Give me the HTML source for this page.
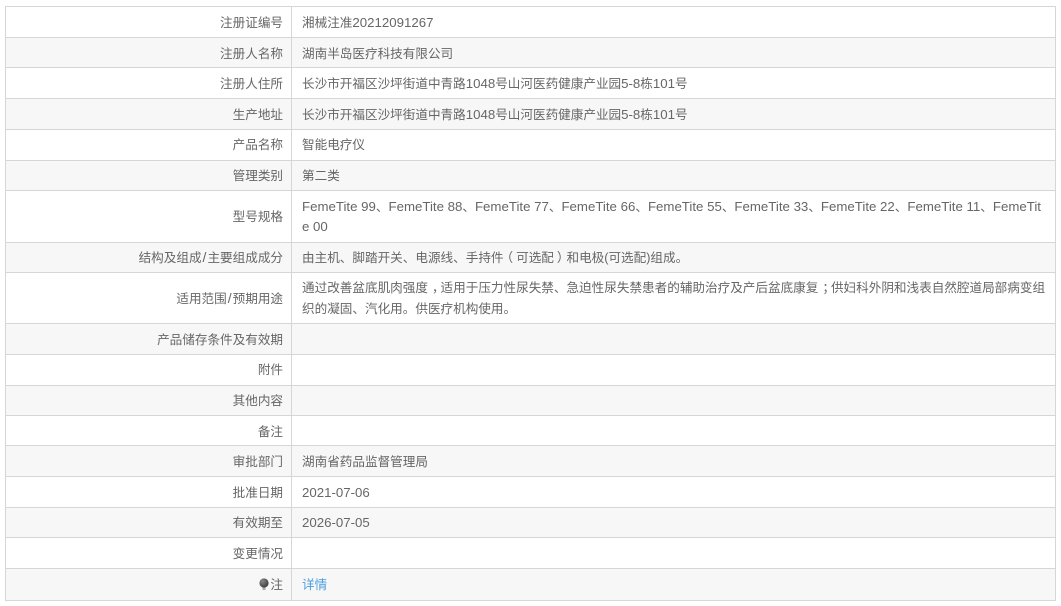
<!DOCTYPE html>
<html lang="zh-CN">
<head>
<meta charset="utf-8">
<title>注册证</title>
<style>
html,body{margin:0;padding:0;background:#fff;}
body{width:1061px;height:606px;overflow:hidden;position:relative;font-family:"Liberation Sans","Noto Sans CJK SC",sans-serif;font-size:12.6px;color:#666;}
.r{position:absolute;left:5px;width:1050px;border-top:1px solid #d6d6d6;box-sizing:border-box;background:#fff;}
.r.g{background:#f7f7f7;}
.l{position:absolute;left:0;right:772px;top:50%;height:22px;margin-top:-11px;line-height:22px;text-align:right;white-space:nowrap;}
.v{position:absolute;left:297px;top:50%;height:22px;margin-top:-11px;line-height:22px;white-space:nowrap;}
.v.two{height:44px;margin-top:-20px;line-height:21px;}
.l.n,.v.n{margin-top:-10px;}
.v.two.n{margin-top:-20px;line-height:20.6px;}
.e{font-size:13.25px;}
.s{font-size:14px;line-height:1;padding:0 1px;}
.sh{position:relative;}
#frame{position:absolute;left:5px;top:6px;width:1051px;height:595px;border:1px solid #d6d6d6;border-top:0;box-sizing:border-box;pointer-events:none;}
#div{position:absolute;left:291px;top:6px;width:1px;height:594px;background:#d6d6d6;}
a{color:#4a9fe0;text-decoration:none;}
.i{position:absolute;left:254px;top:9px;}
</style>
</head>
<body>
<div class="r" style="top:6px;height:31px"><div class="l n">注册证编号</div><div class="v n">湘械注准<span class="e">20212091267</span></div></div>
<div class="r g" style="top:37px;height:30px"><div class="l n">注册人名称</div><div class="v n">湖南半岛医疗科技有限公司</div></div>
<div class="r" style="top:67px;height:31px"><div class="l n">注册人住所</div><div class="v n">长沙市开福区沙坪街道中青路<span class="e">1048</span>号山河医药健康产业园<span class="e">5-8</span>栋<span class="e">101</span>号</div></div>
<div class="r g" style="top:98px;height:31px"><div class="l n">生产地址</div><div class="v n">长沙市开福区沙坪街道中青路<span class="e">1048</span>号山河医药健康产业园<span class="e">5-8</span>栋<span class="e">101</span>号</div></div>
<div class="r" style="top:129px;height:31px"><div class="l">产品名称</div><div class="v">智能电疗仪</div></div>
<div class="r g" style="top:160px;height:30px"><div class="l">管理类别</div><div class="v">第二类</div></div>
<div class="r" style="top:190px;height:52px"><div class="l">型号规格</div><div class="v two n"><span class="e">FemeTite 99</span>、<span class="e">FemeTite 88</span>、<span class="e">FemeTite 77</span>、<span class="e">FemeTite 66</span>、<span class="e">FemeTite 55</span>、<span class="e">FemeTite 33</span>、<span class="e">FemeTite 22</span>、<span class="e">FemeTite 11</span>、<span class="e">FemeTit</span><br><span class="e">e 00</span></div></div>
<div class="r g" style="top:242px;height:30px"><div class="l">结构及组成<span class="s">/</span>主要组成成分</div><div class="v">由主机、脚踏开关、电源线、手持件<span class="sh" style="left:-3px">（</span>可选配<span class="sh" style="left:3px">）</span>和电极(可选配)组成。</div></div>
<div class="r" style="top:272px;height:51px"><div class="l n">适用范围<span class="s">/</span>预期用途</div><div class="v two">通过改善盆底肌肉强度<span class="sh" style="left:4px">，</span>适用于压力性尿失禁、急迫性尿失禁患者的辅助治疗及产后盆底康复<span class="sh" style="left:4px">；</span>供妇科外阴和浅表自然腔道局部病变组<br>织的凝固、汽化用。供医疗机构使用。</div></div>
<div class="r g" style="top:323px;height:31px"><div class="l n">产品储存条件及有效期</div></div>
<div class="r" style="top:354px;height:31px"><div class="l">附件</div></div>
<div class="r g" style="top:385px;height:30px"><div class="l">其他内容</div></div>
<div class="r" style="top:415px;height:30px"><div class="l n">备注</div></div>
<div class="r g" style="top:445px;height:31px"><div class="l n">审批部门</div><div class="v n">湖南省药品监督管理局</div></div>
<div class="r" style="top:476px;height:31px"><div class="l n">批准日期</div><div class="v n"><span class="e">2021-07-06</span></div></div>
<div class="r g" style="top:507px;height:30px"><div class="l">有效期至</div><div class="v"><span class="e">2026-07-05</span></div></div>
<div class="r" style="top:537px;height:31px"><div class="l n">变更情况</div></div>
<div class="r g" style="top:568px;height:32px"><svg class="i" width="10" height="14" viewBox="0 0 10 14"><defs><radialGradient id="b" cx="35%" cy="30%" r="75%"><stop offset="0" stop-color="#888"/><stop offset="1" stop-color="#3a3a3a"/></radialGradient></defs><circle cx="5" cy="5" r="4.6" fill="url(#b)"/><rect x="3.5" y="9.5" width="3" height="2.5" fill="#aaa"/></svg><div class="l">注</div><div class="v"><a>详情</a></div></div>
<div id="frame"></div>
<div id="div"></div>
</body>
</html>
